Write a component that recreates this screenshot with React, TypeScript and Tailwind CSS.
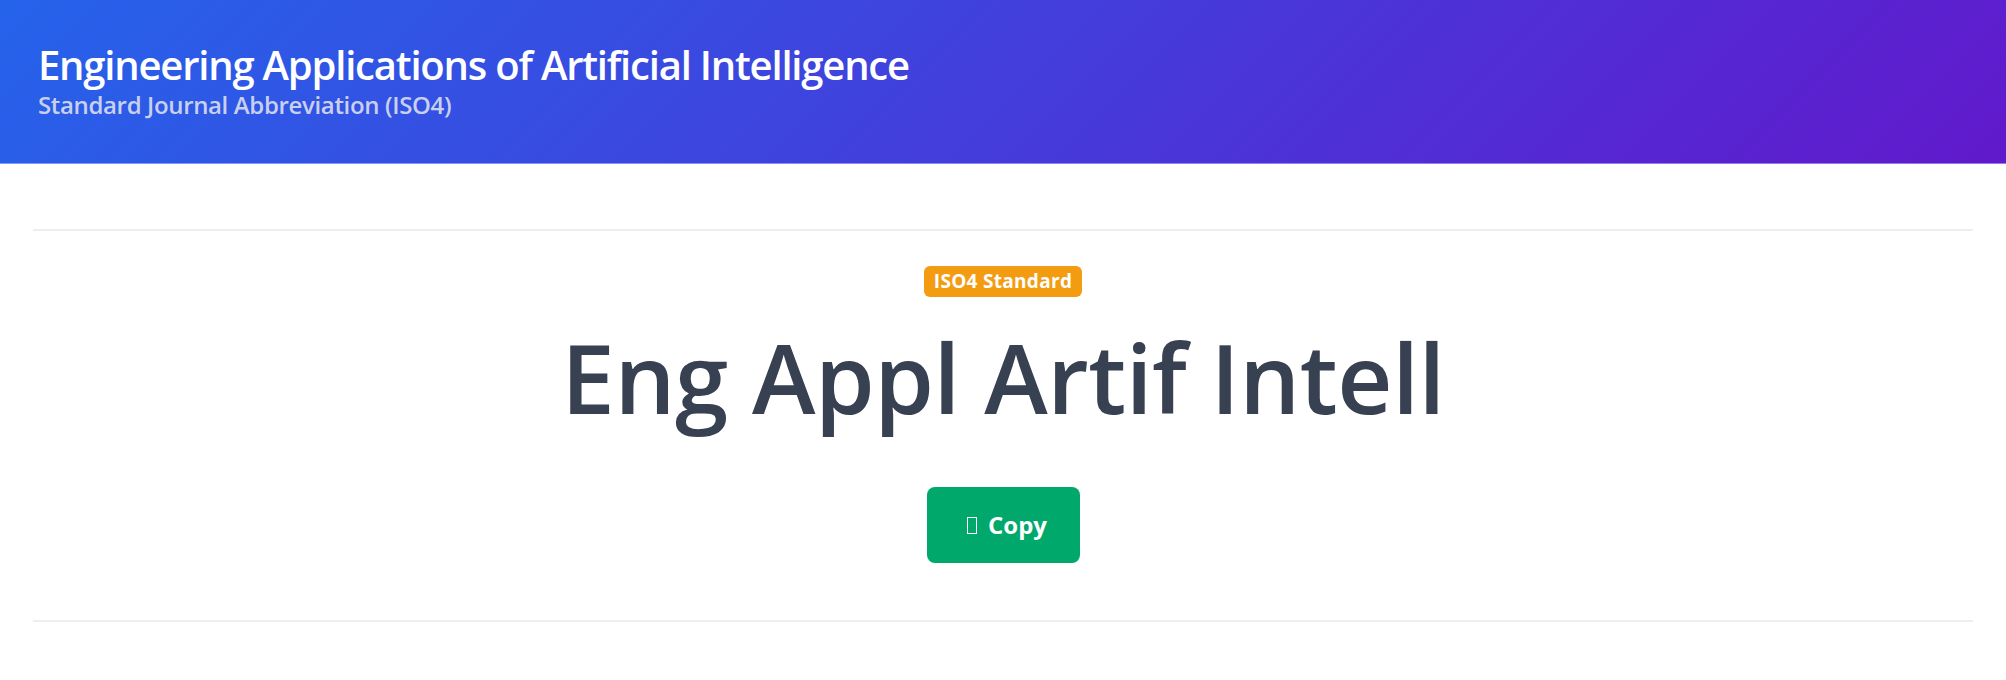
export default function App() {
  return (
    <div className="min-h-[680px] bg-white font-['Open_Sans','Noto_Sans',sans-serif]">
      <header className="h-[164px] border-b border-white/40 bg-[linear-gradient(135deg,#2563eb,#6119cc)] px-[38px] pt-[42px]">
        <h1 className="text-[40px] leading-[45px] font-semibold tracking-[-1.2px] text-white">
          Engineering Applications of Artificial Intelligence
        </h1>
        <p className="text-[24px] leading-[36px] font-semibold tracking-[-0.35px] text-[#c8d0ee]">
          Standard Journal Abbreviation (ISO4)
        </p>
      </header>

      <main className="px-[33px] pt-[65px]">
        <section className="flex flex-col items-center border-t-2 border-b-2 border-[#eeeeee] pt-[35px] pb-[57px]">
          <span className="flex h-[31px] items-center rounded-md bg-[#f39c12] px-[10px] text-[19px] font-bold tracking-[0.3px] text-white">
            ISO4 Standard
          </span>
          <h2 className="mt-[22px] text-[96px] leading-[1.2] font-semibold tracking-[-0.5px] text-[#374151]">
            Eng Appl Artif Intell
          </h2>
          <button className="mt-[53px] flex h-[76px] w-[153px] items-center justify-center gap-[11px] rounded-lg bg-[#00a86b] pl-[8px] text-[24px] font-bold text-white">
            <span className="inline-block h-[17px] w-[10px] border-[1.5px] border-white" />
            Copy
          </button>
        </section>
      </main>
    </div>
  );
}
